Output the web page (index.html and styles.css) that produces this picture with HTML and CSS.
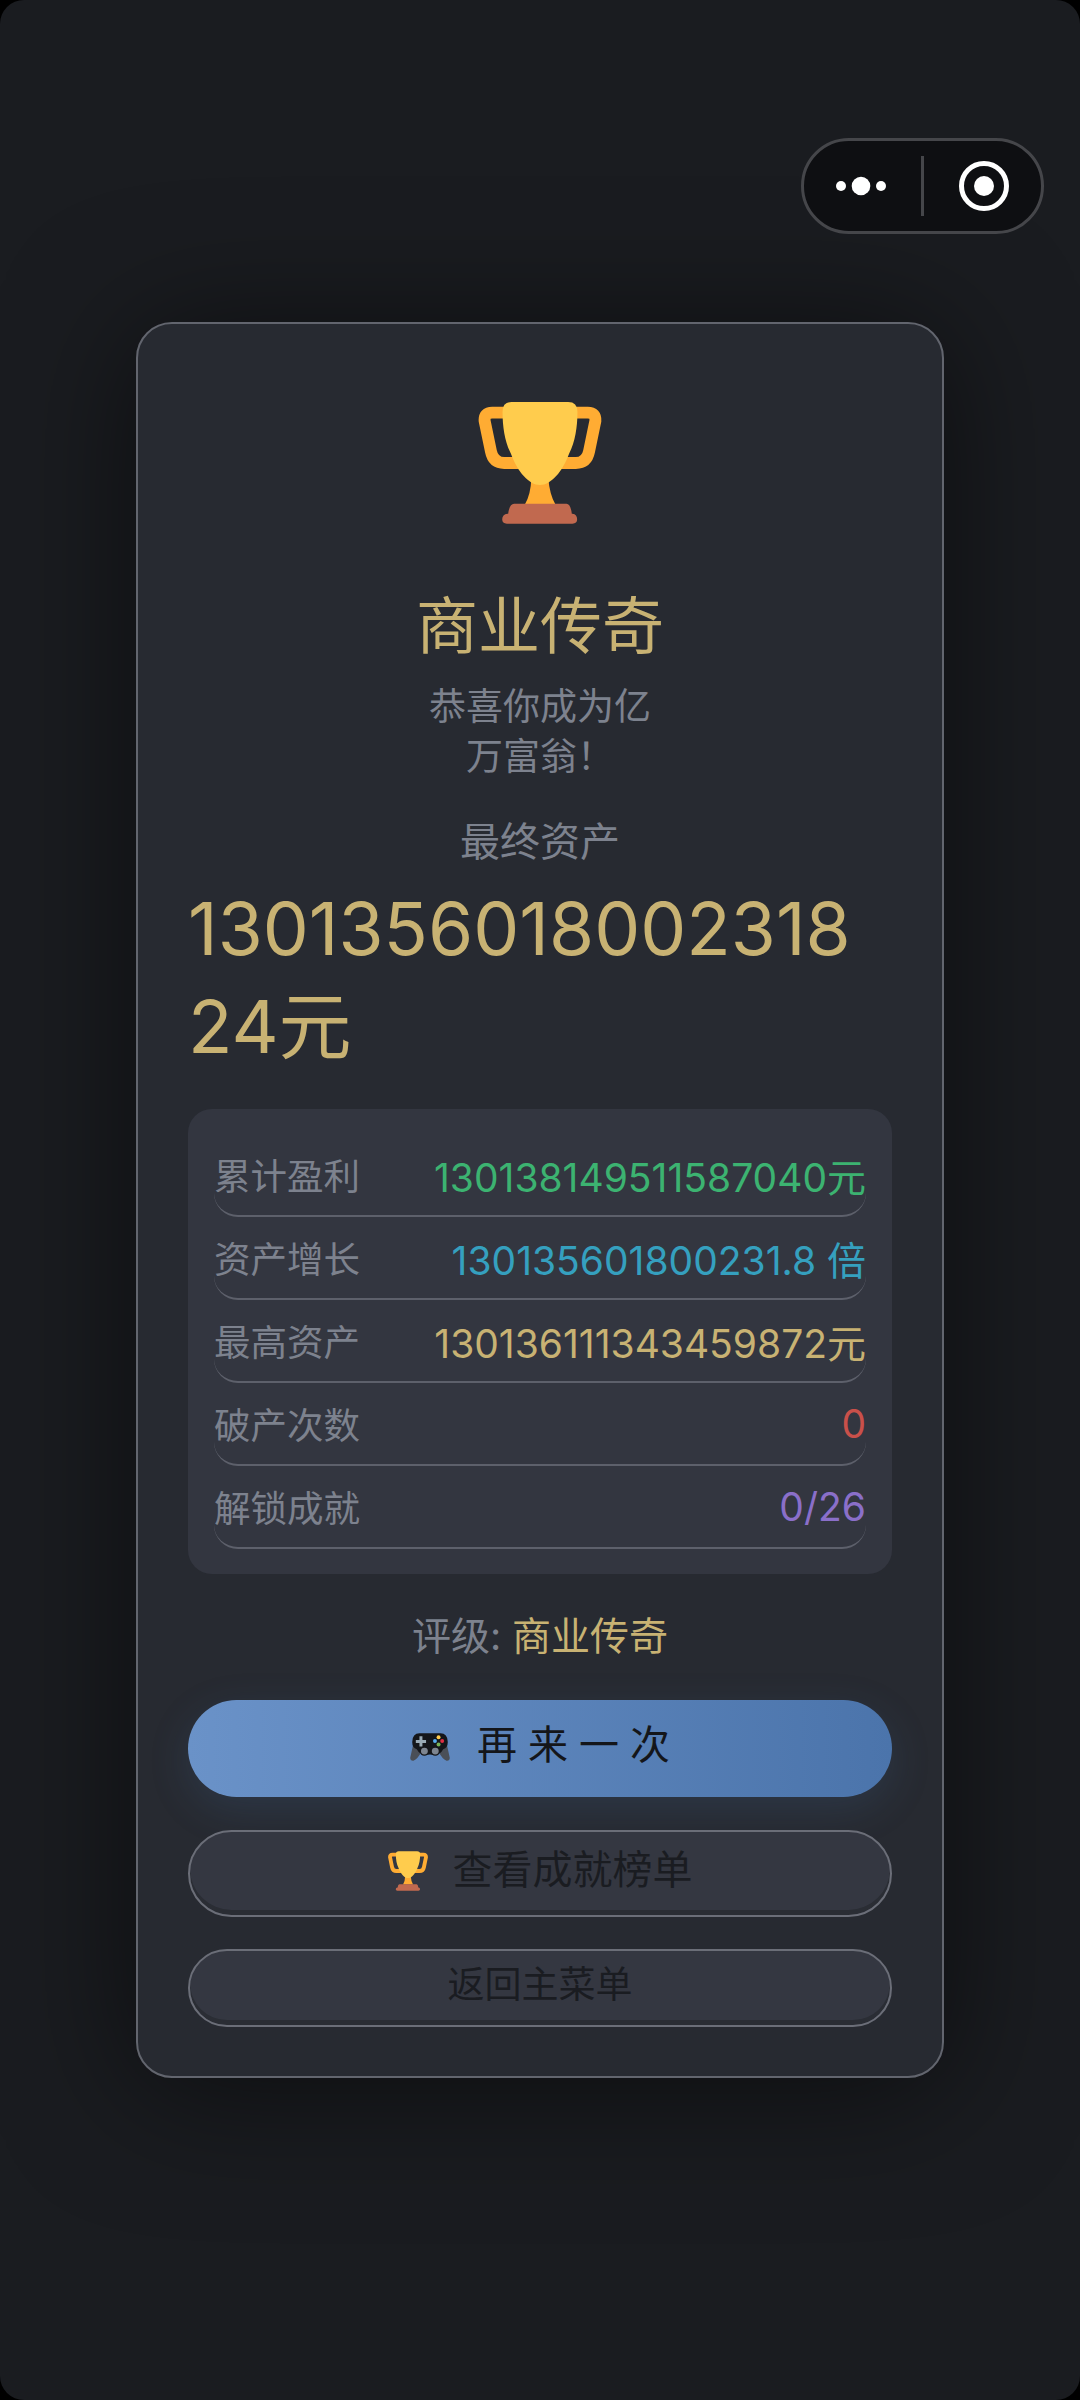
FILE: index.html
```html
<!DOCTYPE html>
<html lang="zh">
<head>
<meta charset="utf-8">
<title>商业传奇</title>
<link rel="stylesheet" href="styles.css">
</head>
<body>
<svg class="defs" width="0" height="0" aria-hidden="true">
  <symbol id="trophy" viewBox="232 95 372 368">
    <path d="M320 127H274Q249 127 251 152L270 244Q277 279 310 279H370" fill="none" stroke="#ffac33" stroke-width="36"/>
    <path d="M515 127H562Q587 127 585 152L566 244Q559 279 526 279H468" fill="none" stroke="#ffac33" stroke-width="36"/>
    <path d="M392 325Q390 375 372 405H465Q447 375 443 325Z" fill="#ffac33"/>
    <path d="M332 95H503Q531 95 531 125C531 170 524 215 506 250C486 305 451 345 418 345C385 345 350 305 330 250C312 215 305 170 305 125Q305 95 332 95Z" fill="#ffcc4d"/>
    <path d="M322 432Q326 402 340 402H498Q510 402 514 432H516Q530 434 530 449Q530 462 516 462H318Q304 462 304 449Q304 434 320 432Z" fill="#c1694f"/>
  </symbol>
  <symbol id="gamepad" viewBox="90 95 120 85">
    <path d="M100 125L90 170Q90 180 100 179Q112 176 125 150H175Q188 176 200 179Q210 180 210 170L200 125Z" fill="#4a4f57"/>
    <path d="M118 96H182Q203 96 204 122Q204 140 190 144Q180 165 150 160Q120 165 110 144Q96 140 96 122Q97 96 118 96Z" fill="#14161a"/>
    <path d="M118 105h9v11h11v9h-11v11h-9v-11h-11v-9h11z" fill="#99aab5"/>
    <circle cx="176" cy="108" r="6" fill="#ffcc4d"/>
    <circle cx="187" cy="119" r="6" fill="#dd2e44"/>
    <circle cx="165" cy="119" r="6" fill="#55acee"/>
    <circle cx="176" cy="130" r="6" fill="#77b255"/>
    <circle cx="133" cy="150" r="14" fill="#14161a"/>
    <circle cx="166" cy="150" r="14" fill="#14161a"/>
    <circle cx="133" cy="150" r="10.5" fill="#7d8590"/>
    <circle cx="166" cy="150" r="10.5" fill="#7d8590"/>
  </symbol>
</svg>

<div class="capsule">
  <svg class="capsule-more" viewBox="0 0 50 20"><circle cx="5" cy="10" r="5"/><circle cx="25" cy="10" r="9.3"/><circle cx="45" cy="10" r="5"/></svg>
  <span class="capsule-line"></span>
  <svg class="capsule-close" viewBox="0 0 50 50"><circle class="ring" cx="25" cy="25" r="22.5"/><circle cx="25" cy="25" r="10"/></svg>
</div>

<main class="card">
  <svg class="hero-icon"><use href="#trophy"/></svg>
  <h1 class="title">商业传奇</h1>
  <p class="subtitle">恭喜你成为亿<br>万富翁&#xFF01;</p>
  <p class="asset-label">最终资产</p>
  <p class="asset-value">1301356018002318<br>24元</p>

  <section class="stats">
    <div class="row"><span class="row-label">累计盈利</span><span class="row-value green">130138149511587040元</span></div>
    <div class="row"><span class="row-label">资产增长</span><span class="row-value blue">130135601800231.8 倍</span></div>
    <div class="row"><span class="row-label">最高资产</span><span class="row-value gold">130136111343459872元</span></div>
    <div class="row"><span class="row-label">破产次数</span><span class="row-value red">0</span></div>
    <div class="row"><span class="row-label">解锁成就</span><span class="row-value purple">0/26</span></div>
  </section>

  <p class="rating">评级: <span class="gold">商业传奇</span></p>

  <button class="btn btn-primary"><svg class="btn-icon pad"><use href="#gamepad"/></svg><span class="spaced">再来一次</span></button>
  <button class="btn btn-second"><svg class="btn-icon"><use href="#trophy"/></svg><span>查看成就榜单</span></button>
  <button class="btn btn-third"><span>返回主菜单</span></button>
</main>
</body>
</html>
```
FILE: styles.css
```css
* { box-sizing: border-box; }
html { margin: 0; padding: 0; background: #000; }
body {
  position: relative;
  margin: 0;
  width: 1080px;
  height: 2400px;
  display: flex;
  align-items: center;
  justify-content: center;
  border-radius: 24px;
  background: #1a1c20;
  font-family: Inter, "Noto Sans CJK SC", sans-serif;
  font-weight: 400;
  overflow: hidden;
}
.defs { position: absolute; }

.capsule {
  position: absolute;
  left: 801px;
  top: 138px;
  width: 243px;
  height: 96px;
  border: 3px solid #45464a;
  border-radius: 48px;
  background: #0e0f12;
}
.capsule-more { position: absolute; left: 32px; top: 35px; width: 50px; height: 20px; fill: #fff; }
.capsule-line { position: absolute; left: 117px; top: 15px; width: 3px; height: 60px; background: #45464a; }
.capsule-close { position: absolute; left: 155px; top: 20px; width: 50px; height: 50px; fill: #fff; }
.capsule-close .ring { fill: none; stroke: #fff; stroke-width: 5; }

.card {
  width: 808px;
  padding: 78px 50px 49px;
  border: 2px solid #62656e;
  border-radius: 36px;
  background: #272a31;
  box-shadow: 0 10px 130px rgba(0, 0, 0, .55);
  display: flex;
  flex-direction: column;
}
.hero-icon { display: block; width: 124px; height: 122px; align-self: center; }
.title {
  margin: 61px 0 0;
  font-size: 62px;
  line-height: 84px;
  font-weight: 400;
  text-align: center;
  color: #c8b273;
}
.subtitle {
  margin: 13px 0 0;
  font-size: 37px;
  line-height: 50px;
  text-align: center;
  color: #7d828e;
}
.asset-label {
  margin: 32px 0 0;
  font-size: 40px;
  line-height: 56px;
  text-align: center;
  color: #7d828e;
}
.asset-value {
  margin: 10px 0 0;
  font-size: 73px;
  line-height: 98px;
  font-weight: 400;
  color: #c8b273;
}
.stats {
  margin-top: 33px;
  padding: 25px 26px;
  border-radius: 24px;
  background: #333640;
}
.row {
  height: 83px;
  display: flex;
  align-items: center;
  justify-content: space-between;
  border-bottom: 2px solid #5d606b;
  border-radius: 24px;
}
.row-label { font-size: 36.5px; color: #7d828e; }
.row-value { font-size: 39px; font-weight: 400; }
.green { color: #3cb371; }
.blue { color: #35a0bf; }
.gold { color: #c8b273; }
.red { color: #c9504a; }
.purple { color: #8a6fc9; }
.rating {
  margin: 34px 0 0;
  font-size: 39px;
  line-height: 56px;
  text-align: center;
  color: #7d828e;
}
.btn {
  width: 100%;
  display: flex;
  align-items: center;
  justify-content: center;
  padding: 0;
  font-family: inherit;
  font-weight: 400;
  color: #1a1c21;
  border-radius: 60px;
}
.btn-primary {
  margin-top: 36px;
  height: 97px;
  padding-bottom: 14px;
  border: 0;
  font-size: 40px;
  gap: 27px;
  color: #14161a;
  background: linear-gradient(90deg, #6a92c8, #4b74ab);
  box-shadow: 0 12px 40px rgba(74, 116, 171, .18);
}
.spaced { letter-spacing: 11px; margin-right: -11px; }
.btn-second {
  margin-top: 33px;
  height: 87px;
  padding-bottom: 14px;
  gap: 25px;
  font-size: 40px;
  border: 2px solid #6b6e78;
  background: #343741;
  box-shadow: inset 0 -5px 0 #2a2d34;
}
.btn-third {
  margin-top: 32px;
  height: 78px;
  padding-bottom: 13px;
  font-size: 37px;
  border: 2px solid #6b6e78;
  background: #343741;
  box-shadow: inset 0 -5px 0 #2a2d34;
}
.btn-icon { display: block; width: 40px; height: 40px; margin-top: 8px; }
.btn-icon.pad { height: 28px; margin-top: 10px; }
```
